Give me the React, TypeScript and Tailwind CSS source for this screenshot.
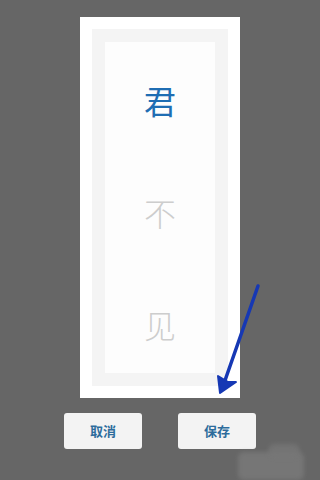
import React from "react";

export default function App() {
  const font = { fontFamily: '"Noto Sans CJK SC", "Noto Sans", sans-serif' };
  return (
    <div className="relative w-[320px] h-[480px] bg-[#666666] overflow-hidden flex flex-col items-center" style={font}>
      <div className="mt-[17px] w-[160px] h-[381px] bg-white p-3">
        <div className="h-full bg-[#f4f4f4] p-[13px]">
          <div className="h-full bg-[#fdfdfd] flex flex-col items-center pt-[42px] gap-[80px]">
            <div className="text-[32px] leading-[32px] text-[#1f6db3]">君</div>
            <div className="text-[32px] leading-[32px] text-[#cdcdcd] font-light">不</div>
            <div className="text-[32px] leading-[32px] text-[#cdcdcd] font-light">见</div>
          </div>
        </div>
      </div>
      <div className="mt-[15px] flex gap-[36px]">
        <div className="w-[78px] h-[36px] rounded-[3px] bg-[#f3f3f3] flex items-center justify-center text-[13px] font-bold text-[#2d6c9c]">取消</div>
        <div className="w-[78px] h-[36px] rounded-[3px] bg-[#f3f3f3] flex items-center justify-center text-[13px] font-bold text-[#2d6c9c]">保存</div>
      </div>
      <svg className="absolute left-0 top-0" width="320" height="480" viewBox="0 0 320 480">
        <line x1="258" y1="286" x2="222" y2="389" stroke="#1638b4" strokeWidth="3.5" strokeLinecap="round" />
        <path d="M220 393 L236 382 L228 382 L218 376 Z" fill="#1638b4" stroke="#1638b4" strokeWidth="2" strokeLinejoin="round" />
      </svg>
      <div className="absolute left-[238px] top-[452px] w-[66px] h-[28px] bg-[#7a7a7a] rounded-[6px] blur-[2px] opacity-80" />
      <div className="absolute left-[268px] top-[444px] w-[32px] h-[14px] bg-[#777777] rounded-full blur-[2px] opacity-80" />
    </div>
  );
}
